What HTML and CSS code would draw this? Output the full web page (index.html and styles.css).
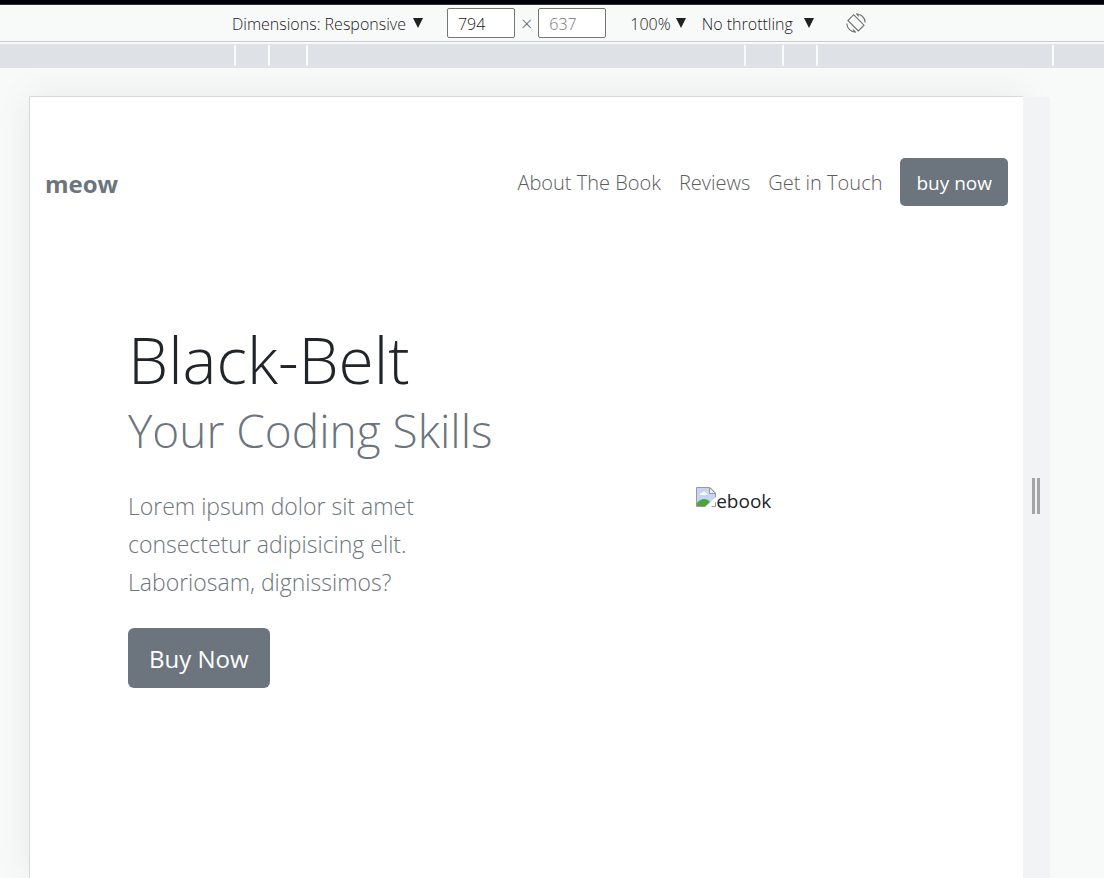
FILE: index.html
```html
<!DOCTYPE html>
<html lang="en">
<head>
<meta charset="utf-8">
<meta name="viewport" content="width=device-width, initial-scale=1">
<title>meow</title>
<link rel="stylesheet" href="styles.css">
</head>
<body>
<div class="window-edge"></div>
<header class="toolbar">
  <label class="picker picker-device">
    <select aria-label="Dimensions"><option>Dimensions: Responsive</option></select>
    <svg class="caret" viewBox="0 0 10 10" aria-hidden="true"><path d="M0 0h10L5 10z"/></svg>
  </label>
  <div class="size">
    <input class="size-input" type="text" value="794" aria-label="Width">
    <span class="times">×</span>
    <input class="size-input muted" type="text" value="637" aria-label="Height">
  </div>
  <label class="picker picker-zoom">
    <select aria-label="Zoom"><option>100%</option></select>
    <svg class="caret" viewBox="0 0 10 10" aria-hidden="true"><path d="M0 0h10L5 10z"/></svg>
  </label>
  <label class="picker picker-network">
    <select aria-label="Throttling"><option>No throttling</option></select>
    <svg class="caret" viewBox="0 0 10 10" aria-hidden="true"><path d="M0 0h10L5 10z"/></svg>
  </label>
  <button class="rotate" type="button" aria-label="Rotate">
    <svg viewBox="0 0 20 20" aria-hidden="true">
      <path d="M7.6 1.7 18 12.2 12.3 18 1.9 7.5z"/>
      <path d="M10 .8c5 0 9 3.6 9.2 8.7M10.4.8l2.600 2.500M9.900 19.100C4.900 19.100 1 15.400.8 10.400M9.500 19.100 7 16.600"/>
    </svg>
  </button>
</header>
<div class="ruler">
  <span class="mark side"></span><span class="mark small"></span><span class="mark medium"></span><span class="mark wide"></span><span class="mark medium"></span><span class="mark small"></span><span class="mark side"></span>
</div>
<main class="stage">
  <div class="device">
    <nav class="nav">
      <a class="brand" href="#">meow</a>
      <div class="links">
        <a href="#about">About The Book</a>
        <a href="#reviews">Reviews</a>
        <a href="#contact">Get in Touch</a>
        <a class="btn" href="#buy">buy now</a>
      </div>
    </nav>
    <section class="hero">
      <div class="copy">
        <h1><span class="title">Black-Belt</span><span class="subtitle">Your Coding Skills</span></h1>
        <p class="lead">Lorem ipsum dolor sit amet consectetur adipisicing elit. Laboriosam, dignissimos?</p>
        <a class="btn btn-large" href="#buy">Buy Now</a>
      </div>
      <div class="cover">
        <svg class="broken" viewBox="0 0 20 20" aria-hidden="true">
          <path fill="#c4d5f5" d="M1 1h13l5 5v6l-7 7H1z"/>
          <path fill="#fff" d="M4 7.500c0-1.500 1.500-2 2-1.500.500-2 3.500-2 4 0 1.500 0 2 2 .500 2H4z"/>
          <path fill="#4ca63b" d="M1 19v-3c3-4 7-5 11-3l2 2-4 4z"/>
          <path fill="none" stroke="#9b9b9b" d="M10 19.500H.500V.500H14l5.500 5.500v13.500H14"/>
          <path fill="#eee" stroke="#9b9b9b" d="M13.500.500V6.500h6z"/>
          <path fill="#fff" d="M9 20 20 10v5l-5 5z"/>
        </svg>
        <span>ebook</span>
      </div>
    </section>
  </div>
  <div class="resizer"><span></span><span></span></div>
</main>
</body>
</html>
```
FILE: styles.css
```css
* { box-sizing: border-box; }

body {
  margin: 0;
  min-height: 100vh;
  display: flex;
  flex-direction: column;
  background: #f8faf9;
  color: #212529;
  font-family: "Open Sans", "Noto Sans", sans-serif;
  font-size: 19px;
}

a { color: inherit; text-decoration: none; }

.window-edge {
  height: 5px;
  background: #020107;
  border-bottom: 1px solid #30343a;
}

.toolbar {
  height: 37px;
  display: flex;
  align-items: center;
  padding-left: 232px;
  border-bottom: 1px solid #c9cccf;
  font-size: 16px;
  font-weight: 300;
}

.picker { display: flex; align-items: center; gap: 7px; }
.picker-device { margin-right: 24px; }
.picker-zoom { gap: 5px; margin: 0 16px 0 24px; }
.picker-network { gap: 11px; }
.picker select {
  appearance: none;
  field-sizing: content;
  border: 0;
  padding: 2px 0 0;
  background: none;
  color: #202124;
  font: inherit;
}
.caret { width: 10px; height: 10px; fill: #202124; }

.size { display: flex; align-items: center; gap: 6px; color: #5f6368; }
.size-input {
  width: 68px;
  height: 30px;
  padding: 2px 10px 0;
  border: 1px solid #767676;
  border-radius: 2px;
  background: #fff;
  color: #202124;
  font: inherit;
}
.size-input.muted { color: #757575; }
.times { font-size: 20px; line-height: 20px; padding-top: 2px; }

.rotate {
  margin-left: 32px;
  padding: 0;
  border: 0;
  background: none;
  display: flex;
}
.rotate svg { width: 20px; height: 20px; fill: none; stroke: #6e6e6e; stroke-width: 1.1; }

.ruler {
  display: flex;
  height: 24px;
  margin-top: 2px;
  padding: 1px 0 2px;
  background: #dee1e6;
}
.mark { border-right: 2px solid #fafbfb; }
.side { width: 236px; }
.small { width: 34px; }
.medium { width: 38px; }
.wide { width: 438px; }

.stage {
  flex: 1;
  display: flex;
  padding: 28px 54px 0 29px;
  overflow: hidden;
}
.device {
  flex: 1;
  border: 1px solid #d9dadb;
  border-width: 1px 0 0 1px;
  background: #fff;
  box-shadow: 0 0 36px rgba(0, 0, 0, 0.07);
}
.resizer {
  width: 27px;
  margin-top: 1px;
  padding: 16px 2px 0 0;
  display: flex;
  align-items: center;
  justify-content: center;
  gap: 2px;
  background: #f1f3f5;
  position: relative;
}
.resizer span { width: 3px; height: 36px; background: #a5a5a5; }

.nav {
  display: flex;
  align-items: center;
  justify-content: space-between;
  padding: 61px 15px 0;
}
.brand { padding-top: 2px; color: #6c757d; font-size: 24px; font-weight: 700; }
.links {
  display: flex;
  align-items: baseline;
  gap: 18px;
  color: #5c5c5c;
  font-size: 20px;
  font-weight: 300;
}

.btn {
  display: inline-block;
  padding: 11px 16px 9px;
  border-radius: 5px;
  background: #6c757d;
  color: #fff;
  font-size: 19px;
  font-weight: 400;
  line-height: 28px;
}

.hero {
  display: grid;
  grid-template-columns: 1fr 1fr;
  align-items: center;
  padding: 112px 98px 0;
}
h1 { margin: 0; font-weight: 300; }
.title, .subtitle { display: block; white-space: nowrap; }
.title { font-size: 64px; line-height: 84px; }
.subtitle { font-size: 46px; line-height: 56px; color: #6c757d; }
.lead {
  max-width: 320px;
  margin: 29px 0 27px;
  color: #6c757d;
  font-size: 23px;
  font-weight: 300;
  line-height: 38px;
}
.btn-large { padding: 13px 21px 11px; font-size: 24px; line-height: 36px; border-radius: 6px; }
.cover { display: flex; align-items: center; justify-content: center; padding: 0 0 4px 16px; }
.broken { width: 20px; height: 20px; margin-bottom: 8px; }
```
